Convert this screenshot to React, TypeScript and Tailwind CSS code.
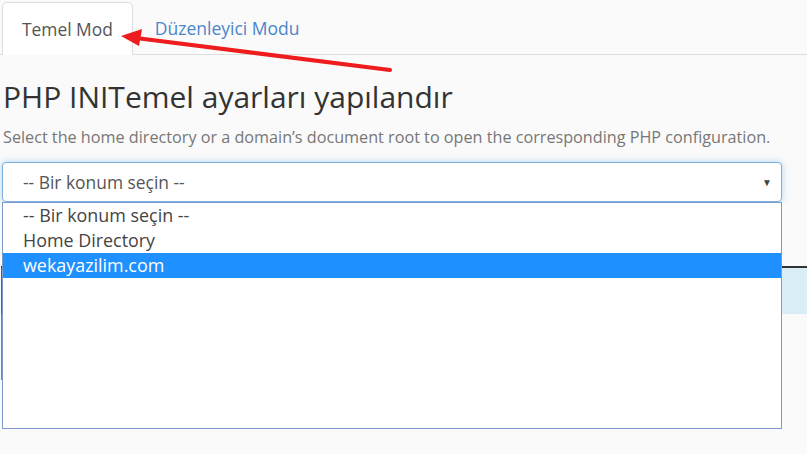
import React from 'react';

const options = ['-- Bir konum seçin --', 'Home Directory', 'wekayazilim.com'];

function App() {
  const selected = 2;

  return (
    <div
      className="relative w-full h-[454px] overflow-hidden bg-[#fafafa] text-[#333]"
      style={{ fontFamily: '"Open Sans", "Noto Sans", sans-serif' }}
    >
      {/* Tabs */}
      <nav className="flex items-end pt-[2px] pl-[2px] border-b border-[#ddd]">
        <div className="h-[53px] -mb-px px-[19px] flex items-center bg-white border border-b-0 border-[#ddd] rounded-t-[5px] text-[17.4px] text-[#555]">
          Temel Mod
        </div>
        <div className="h-[52px] pl-[22px] flex items-center text-[17.5px] text-[#4a86c8]">
          Düzenleyici Modu
        </div>
      </nav>

      {/* Content */}
      <main className="px-[3px]">
        <h1 className="mt-[25px] text-[30px] leading-[33px] font-normal text-[#333]">
          PHP INITemel ayarları yapılandır
        </h1>
        <p className="mt-[13px] text-[16.2px] leading-[22px] text-[#777]">
          Select the home directory or a domain’s document root to open the corresponding PHP configuration.
        </p>

        <div className="relative mt-[14px] w-[780px] -ml-px">
          {/* Select box */}
          <div className="h-[40px] flex items-center justify-between pl-[20px] pr-[9px] bg-white border border-[#7fb0dc] rounded-[4px] shadow-[0_0_6px_rgba(102,175,233,0.5)] text-[17.4px] text-[#555]">
            <span>-- Bir konum seçin --</span>
            <span className="text-[10px] text-[#444]">▼</span>
          </div>

          {/* Open dropdown list */}
          <ul className="absolute left-0 top-[40px] z-10 w-[780px] h-[227px] bg-white border border-[#7d9ad0] text-[17.9px]">
            {options.map((opt, i) => (
              <li
                key={opt}
                className={`h-[25px] leading-[25px] pl-[20px] ${
                  i === selected ? 'bg-[#1e90ff] text-white' : 'text-[#444]'
                }`}
              >
                {opt}
              </li>
            ))}
          </ul>
        </div>
      </main>

      {/* Content under the open list */}
      <section className="mt-[64px] ml-[1px] border-t-2 border-[#333]">
        <div className="h-[46px] bg-[#d9edf7] border-l-2 border-[#3a6a8a]" />
        <div className="h-[66px] border-l-2 border-[#6a88a8]" />
      </section>

      {/* Annotation arrow */}
      <svg className="absolute left-0 top-0 pointer-events-none" width="807" height="454">
        <line x1="390" y1="70" x2="136" y2="38" stroke="#ee1c1c" strokeWidth="4" strokeLinecap="round" />
        <polygon points="121,36 142,29 139,46" fill="#ee1c1c" />
      </svg>
    </div>
  );
}

export default App;
